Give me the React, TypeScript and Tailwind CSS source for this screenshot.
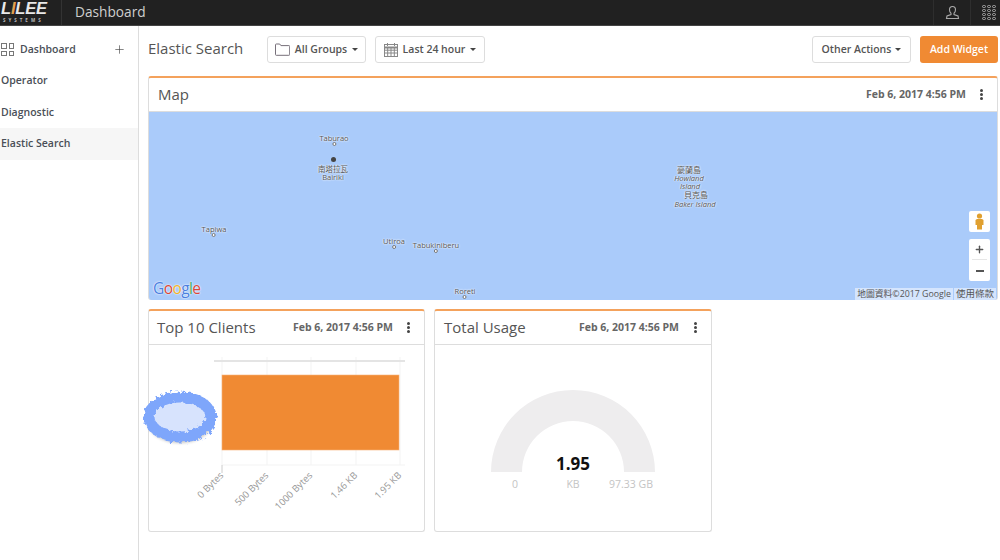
import { Plus } from "lucide-react";

const font = { fontFamily: '"Open Sans", "Noto Sans CJK TC", sans-serif' };

const Caret = () => (
  <span className="inline-block w-0 h-0 border-x-[3px] border-x-transparent border-t-[3.5px] border-t-[#444]" />
);

const Kebab = () => (
  <div className="flex flex-col gap-[1.5px] w-[3px]">
    <span className="w-[3px] h-[2.5px] rounded-full bg-[#444]" />
    <span className="w-[3px] h-[2.5px] rounded-full bg-[#444]" />
    <span className="w-[3px] h-[2.5px] rounded-full bg-[#444]" />
  </div>
);

const FolderIcon = () => (
  <svg width="15" height="13" viewBox="0 0 15 13" fill="none" stroke="#77707a" strokeWidth="1">
    <path d="M.5 11.5V1.8a.8.8 0 0 1 .8-.8h3.4l1.2 1.6h8a.8.8 0 0 1 .8.8v8.1a.8.8 0 0 1-.8.8H1.3a.8.8 0 0 1-.8-.8z" />
  </svg>
);

const CalendarIcon = () => (
  <svg width="14" height="14" viewBox="0 0 14 14" fill="none" stroke="#888" strokeWidth="1">
    <rect x=".5" y="1.5" width="13" height="12" />
    <path d="M.5 4.500h13" strokeWidth="2" />
    <path d="M3.500 0v3M10.500 0v3M.5 7.200h13M.5 10h13M3.700 5v8M7 5v8M10.300 5v8" />
  </svg>
);

const GroupButton = ({ icon, label, w }: { icon: React.ReactNode; label: string; w: string }) => (
  <button className={`${w} h-[27px] flex items-center justify-center gap-[5px] bg-white border border-[#ddd] rounded-[3px] text-[10.500px] font-semibold text-[#555]`}>
    {icon}
    <span>{label}</span>
    <Caret />
  </button>
);

const CardHeader = ({ title, pad, wide }: { title: string; pad: string; wide?: boolean }) => (
  <div className={`h-[34px] flex items-center justify-between border-b border-[#ddd] ${pad} pr-[14px]`}>
    <span className="text-[15px] text-[#555] leading-none">{title}</span>
    <div className={`flex items-center ${wide ? "gap-[15px]" : "gap-[14px]"}`}>
      <span className="text-[10.500px] font-bold text-[#666]">Feb 6, 2017 4:56 PM</span>
      <Kebab />
    </div>
  </div>
);

const Pin = ({ x, y, label, big }: { x: number; y: number; label: string[]; big?: boolean }) => (
  <div className="absolute flex flex-col items-center -translate-x-1/2" style={{ left: x, top: y }}>
    {label.map((l) => (
      <span key={l} className="text-[7.500px] leading-[8px] text-[#555] whitespace-nowrap [text-shadow:0_0_2px_white,0_0_2px_white]">{l}</span>
    ))}
    <span className={big ? "w-[5px] h-[5px] rounded-full bg-[#444] order-first mb-[3px]" : "w-[4px] h-[4px] rounded-full border border-[#777] bg-white"} />
  </div>
);

const MapLabel = ({ x, y, text, italic }: { x: number; y: number; text: string; italic?: boolean }) => (
  <span
    className={`absolute -translate-x-1/2 leading-[8px] text-[#555] whitespace-nowrap [text-shadow:0_0_2px_white,0_0_2px_white] ${italic ? "italic text-[7.500px]" : "text-[8px]"}`}
    style={{ left: x, top: y }}
  >
    {text}
  </span>
);

const MapArea = () => (
  <div className="relative h-[188px] bg-[#aacbfa] overflow-hidden rounded-b-[3px]">
    <Pin x={185} y={22} label={["Taburao"]} />
    <Pin x={184} y={45} label={["南塔拉瓦", "Bairiki"]} big />
    <Pin x={65} y={113} label={["Tapiwa"]} />
    <Pin x={245} y={125} label={["Utiroa"]} />
    <Pin x={287} y={129} label={["Tabukiniberu"]} />
    <Pin x={316} y={175} label={["Roreti"]} />
    <MapLabel x={540} y={54} text="豪蘭島" />
    <MapLabel x={540} y={62} text="Howland" italic />
    <MapLabel x={541} y={70} text="Island" italic />
    <MapLabel x={547} y={79} text="貝克島" />
    <MapLabel x={546} y={88} text="Baker Island" italic />

    <span
      className="absolute left-[4px] bottom-[4px] text-[15.500px] font-medium leading-none tracking-[-0.6px] [text-shadow:0_0_2px_white,0_0_1px_white]"
      style={{ fontFamily: '"Open Sans", sans-serif' }}
    >
      <span className="text-[#4a7fe0]">G</span>
      <span className="text-[#d9463a]">o</span>
      <span className="text-[#eeb22a]">o</span>
      <span className="text-[#4a7fe0]">g</span>
      <span className="text-[#3da65a]">l</span>
      <span className="text-[#d9463a]">e</span>
    </span>

    <div className="absolute left-[820px] top-[99px] w-[21px] h-[21px] bg-white rounded-[2px] flex items-center justify-center">
      <svg width="9" height="17" viewBox="0 0 9 17" fill="#e0a030">
        <circle cx="4.500" cy="3" r="2.600" />
        <path d="M2 6h5l1.500 1v5H7v4.500H2V12H.5V7z" />
      </svg>
    </div>
    <div className="absolute left-[820px] top-[127px] w-[21px] h-[42px] bg-white rounded-[2px] flex flex-col items-center">
      <span className="h-[20px] flex items-center justify-center">
        <Plus size={11} strokeWidth={3} color="#555" />
      </span>
      <span className="w-[15px] h-px bg-[#e6e6e6]" />
      <span className="h-[21px] flex items-center justify-center">
        <span className="w-[8px] h-[2px] bg-[#555]" />
      </span>
    </div>
    <div className="absolute right-[1px] bottom-0 flex gap-[1px] leading-[12px] text-[#555] h-[12px]">
      <span className="px-[2px] bg-white/50 text-[8.800px]">地圖資料©2017 Google</span>
      <span className="px-[2px] bg-white/50 text-[9.500px]">使用條款</span>
    </div>
  </div>
);

const BarChart = () => {
  const ticks = [
    { x: 73, l: "0 Bytes" },
    { x: 118, l: "500 Bytes" },
    { x: 162, l: "1000 Bytes" },
    { x: 207, l: "1.46 KB" },
    { x: 251, l: "1.95 KB" },
  ];
  return (
    <svg width="276" height="187" viewBox="0 0 276 187" className="block overflow-visible" style={font}>
      <defs>
        <filter id="rough" x="-20%" y="-20%" width="140%" height="150%">
          <feTurbulence type="fractalNoise" baseFrequency="0.3" numOctaves="2" seed="4" />
          <feDisplacementMap in="SourceGraphic" scale="7" />
        </filter>
        <filter id="soft" x="-20%" y="-20%" width="140%" height="150%">
          <feGaussianBlur stdDeviation="1.500" />
        </filter>
      </defs>
      {ticks.map((t) => (
        <line key={t.x} x1={t.x} x2={t.x} y1="12" y2="120" stroke="#f3f3f3" />
      ))}
      <line x1="65" x2="256" y1="16" y2="16" stroke="#e4e4e4" strokeWidth="2" />
      <line x1="73" x2="256" y1="120" y2="120" stroke="#f3f3f3" />
      <line x1="73" x2="73" y1="120" y2="128" stroke="#ccc" />
      <rect x="73" y="30" width="177" height="75" fill="#f08a33" stroke="#f7b27a" strokeWidth="0.600" />
      <ellipse cx="31" cy="75" rx="33" ry="23" fill="#555" opacity="0.35" filter="url(#soft)" />
      <ellipse cx="31" cy="72" rx="31" ry="20" fill="#d7e3fd" stroke="#7ea6fb" strokeWidth="11" filter="url(#rough)" />
      {ticks.map((t) => (
        <text key={t.l} x={t.x + 2} y="131" fontSize="9.500" fill="#999" textAnchor="end" transform={`rotate(-45 ${t.x + 2} 131)`}>
          {t.l}
        </text>
      ))}
    </svg>
  );
};

const Gauge = () => (
  <svg width="276" height="187" viewBox="0 0 276 187" className="block" style={font}>
    <path d="M56 127a82 82 0 0 1 164 0h-31a51 51 0 0 0-102 0z" fill="#eeedee" />
    <text x="138" y="125" fontSize="17" fontWeight="700" fill="#111" textAnchor="middle">1.95</text>
    <text x="80" y="143" fontSize="10.500" fill="#c4c4c4" textAnchor="middle">0</text>
    <text x="138" y="143" fontSize="10.500" fill="#c4c4c4" textAnchor="middle">KB</text>
    <text x="196" y="143" fontSize="10.500" fill="#c4c4c4" textAnchor="middle">97.33 GB</text>
  </svg>
);

const Card = ({ children, className }: { children: React.ReactNode; className: string }) => (
  <div className={`${className} bg-white border border-[#ddd] border-t-2 border-t-[#f4a25c] rounded-[3px]`}>{children}</div>
);

export default function App() {
  return (
    <div className="w-[1000px] h-[560px] bg-white flex flex-col overflow-hidden" style={font}>
      <header className="h-[26px] shrink-0 bg-[#212121] border-b border-[#444] flex items-stretch text-[#ddd]">
        <div className="w-[62px] border-r border-[#333] relative">
          <div
            className="absolute top-0 left-px text-[16.500px] leading-[16px] font-bold italic tracking-[-0.2px] text-[#e8e8e8]"
            style={{ fontFamily: '"Liberation Sans", sans-serif' }}
          >
            L<span className="text-[#e0a050]">I</span>LEE
          </div>
          <div className="absolute top-[18px] left-[3px] text-[4.500px] leading-[5px] font-bold tracking-[3px] text-[#bbb]">SYSTEMS</div>
        </div>
        <div className="flex-1 pl-[13px] text-[13.700px] leading-[24px] text-[#cfcfcf]">Dashboard</div>
        <div className="w-[37px] border-l border-[#2e2e2e] flex items-center justify-center">
          <svg width="15" height="15" viewBox="0 0 15 15" fill="none" stroke="#aaa" strokeWidth="1.100">
            <path d="M7.500 1.500c-2 0-3 1.500-3 3.200 0 1.500.8 3 1.500 3.500v1.300l-4 1.500-.5 2.500h12l-.5-2.500-4-1.500V8.200c.7-.5 1.500-2 1.500-3.500 0-1.700-1-3.200-3-3.200z" />
          </svg>
        </div>
        <div className="w-[30px] border-l border-[#2e2e2e] flex items-center justify-start pl-[11px]">
          <div className="grid grid-cols-3 gap-[1px]">
            {Array.from({ length: 12 }).map((_, i) => (
              <span key={i} className="w-[4px] h-[3px] rounded-full border border-[#aaa]" />
            ))}
          </div>
        </div>
      </header>

      <div className="flex-1 flex min-h-0">
        <aside className="w-[139px] shrink-0 border-r border-[#ddd] pt-[8px] text-[10.500px] font-semibold text-[#4a4f57]">
          <div className="h-[31px] flex items-center justify-between pr-[12px]">
            <div className="flex items-center gap-[6px]">
              <div className="grid grid-cols-2 gap-[2px] pl-px">
                <span className="w-[5.500px] h-[5.500px] border border-[#777]" />
                <span className="w-[5.500px] h-[5.500px] border border-[#777]" />
                <span className="w-[5.500px] h-[5.500px] border border-[#777]" />
                <span className="w-[5.500px] h-[5.500px] border border-[#777]" />
              </div>
              <span>Dashboard</span>
            </div>
            <Plus size={13} strokeWidth={1.200} color="#444" />
          </div>
          <div className="h-[32px] flex items-center pl-px">Operator</div>
          <div className="h-[31px] flex items-center pl-px">Diagnostic</div>
          <div className="h-[32px] flex items-center pl-px bg-[#f6f6f6]">Elastic Search</div>
        </aside>

        <main className="flex-1 min-w-0 pl-[9px] pr-[2px]">
          <div className="h-[50px] pt-[10px] flex items-start">
            <h1 className="w-[119px] text-[15px] leading-[25px] text-[#555]">Elastic Search</h1>
            <div className="flex gap-[9px]">
              <GroupButton icon={<FolderIcon />} label="All Groups" w="w-[99px]" />
              <GroupButton icon={<CalendarIcon />} label="Last 24 hour" w="w-[110px]" />
            </div>
            <div className="ml-auto flex gap-[9px]">
              <button className="w-[99px] h-[27px] flex items-center justify-center gap-[4px] bg-white border border-[#ddd] rounded-[3px] text-[10.500px] font-semibold text-[#555]">
                Other Actions
                <Caret />
              </button>
              <button className="w-[78px] h-[27px] bg-[#f08a33] rounded-[3px] text-[10.500px] font-semibold text-white">Add Widget</button>
            </div>
          </div>

          <Card className="w-[850px] h-[224px]">
            <CardHeader title="Map" pad="pl-[9px]" />
            <MapArea />
          </Card>

          <div className="flex gap-[9px] mt-[9px]">
            <Card className="w-[277px] h-[223px]">
              <CardHeader title="Top 10 Clients" pad="pl-[8px]" />
              <BarChart />
            </Card>
            <Card className="w-[278px] h-[223px]">
              <CardHeader title="Total Usage" pad="pl-[9px]" wide />
              <Gauge />
            </Card>
          </div>
        </main>
      </div>
    </div>
  );
}
